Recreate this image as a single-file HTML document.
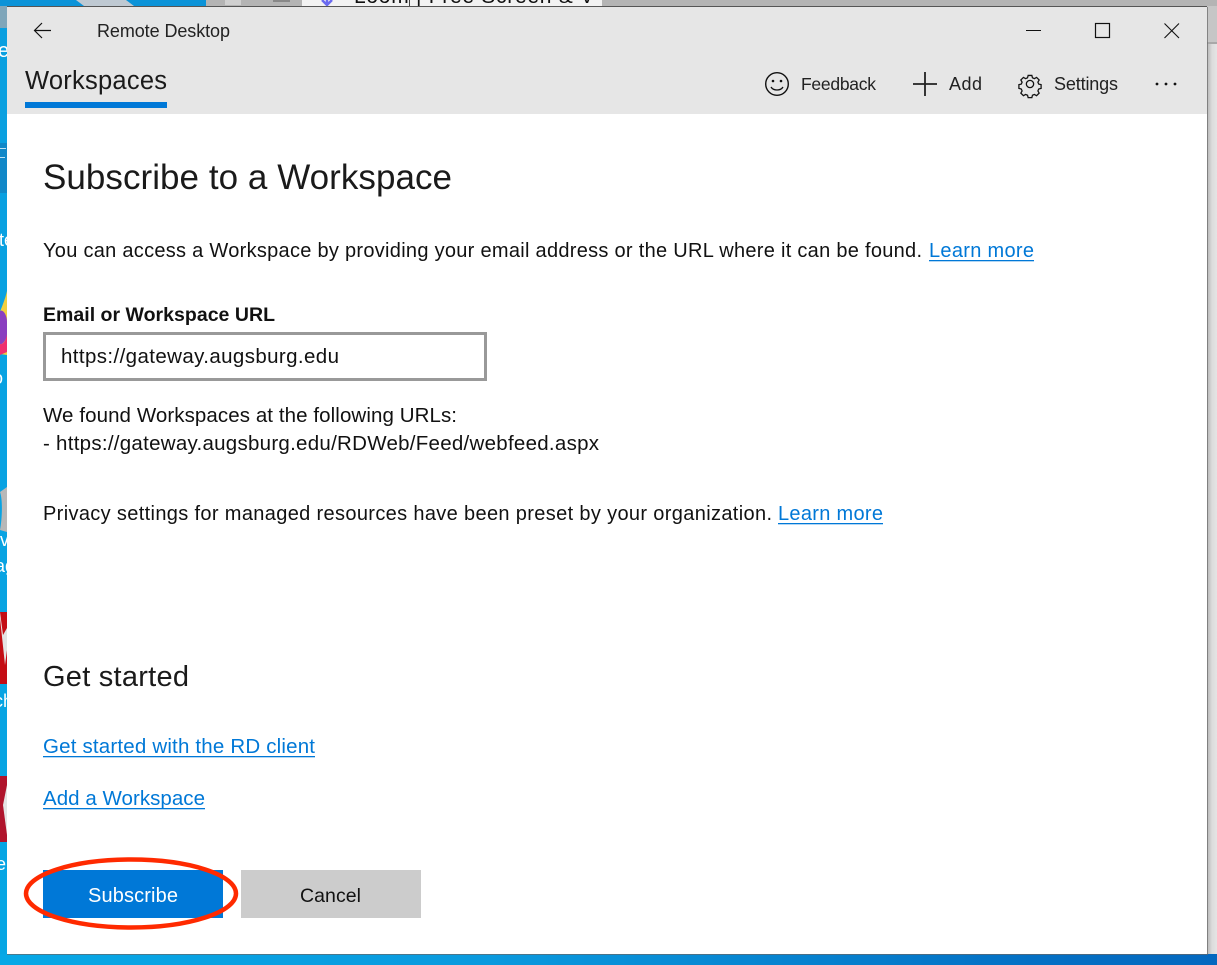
<!DOCTYPE html>
<html><head><meta charset="utf-8"><style>
html,body{margin:0;padding:0;width:1217px;height:965px;overflow:hidden;background:#0aa0de}
svg{display:block}
text{font-family:"Liberation Sans",sans-serif;fill:#111}
</style></head><body>
<svg width="1217" height="965" viewBox="0 0 1217 965" xmlns="http://www.w3.org/2000/svg">
<defs>
<linearGradient id="edge" x1="0" x2="1" y1="0" y2="0"><stop offset="0" stop-color="#b5b5b5"/><stop offset=".5" stop-color="#dcdcdc"/><stop offset="1" stop-color="#e4e4e4"/></linearGradient>
<linearGradient id="blue" x1="0" x2="0" y1="0" y2="1"><stop offset="0" stop-color="#0a9fe0"/><stop offset="1" stop-color="#06a6e4"/></linearGradient>
<linearGradient id="bot" x1="0" x2="1" y1="0" y2="0"><stop offset="0" stop-color="#07a8e6"/><stop offset=".4" stop-color="#0a9ade"/><stop offset=".85" stop-color="#0470c4"/><stop offset="1" stop-color="#0468bf"/></linearGradient>
</defs>
<!-- desktop -->
<rect width="1217" height="965" fill="url(#blue)"/>
<rect x="0" y="0" width="7" height="6" fill="#0b93d8"/>
<rect x="0" y="6" width="7" height="22" fill="#7fa6ba"/>
<rect x="0" y="143" width="7" height="50" fill="#1188c8"/>
<rect x="0" y="148" width="6" height="1" fill="#bfe3f5"/>
<rect x="0" y="157" width="5" height="1" fill="#bfe3f5"/>
<path d="M7 291V355L0 354V312C2 306 5 300 7 291Z" fill="#f0cf3f"/>
<path d="M0 311C3 309 7 315 7 322V336C5 342 2 345 0 344Z" fill="#8a3ec0"/>
<path d="M0 344C3 345 6 341 7 334V352L0 355Z" fill="#ef2f6f"/>
<path d="M7 487V532L0 530C2 520 3 500 0 492Z" fill="#b8b8b8"/>
<rect x="0" y="612" width="7" height="72" fill="#c40d14"/>
<path d="M0 618L5 665L7 650V628L3 635L0 612Z" fill="#e4e4e4"/>
<rect x="0" y="776" width="7" height="66" fill="#b0142c"/>
<path d="M7 785L3 805L7 835Z" fill="#e4e4e4"/>
<text x="-2" y="57" font-size="20" style="fill:#fff">e</text>
<text x="-1" y="246" font-size="18" style="fill:#fff">te</text>
<text x="-7" y="384" font-size="18" style="fill:#fff">o</text>
<text x="-5" y="546" font-size="18" style="fill:#fff">tv</text>
<text x="-5" y="572" font-size="18" style="fill:#fff">ag</text>
<text x="-6" y="707" font-size="18" style="fill:#fff">ch</text>
<text x="-4" y="870" font-size="18" style="fill:#fff">e</text>
<!-- browser behind -->
<rect x="0" y="0" width="206" height="6" fill="#0b93d8"/>
<path d="M76 0h50l8 6H84Z" fill="#bfc9d2"/>
<rect x="206" y="0" width="96" height="6" fill="#b4b4b4"/>
<rect x="225" y="0" width="16" height="5" fill="#d0d0d0"/>
<rect x="273" y="0" width="17" height="2" fill="#888"/>
<rect x="302" y="0" width="300" height="6" fill="#f2f2f2"/>
<path d="M322 0l5 5 5-5M327 0v5" stroke="#6a6af0" stroke-width="2.500" fill="none"/>
<text x="354" y="3" font-size="21" textLength="240" lengthAdjust="spacing">Loom | Free Screen &amp; V</text>
<rect x="409" y="0" width="1" height="6" fill="#444"/>
<rect x="602" y="0" width="615" height="6" fill="#b4b4b4"/>
<rect x="1207" y="6" width="10" height="959" fill="url(#edge)"/>
<rect x="1207" y="6" width="10" height="37" fill="#c6c6c6"/>
<rect x="1207" y="42" width="10" height="2" fill="#a8a8a8"/>
<rect x="0" y="954" width="1217" height="11" fill="url(#bot)"/>
<!-- window -->
<rect x="7" y="7" width="1201" height="948" fill="#666" opacity=".7"/>
<rect x="7" y="6" width="1200" height="1" fill="#555"/>
<rect x="7" y="7" width="1200" height="107" fill="#e6e6e6"/>
<rect x="7" y="114" width="1200" height="840" fill="#fff"/>
<!-- title bar -->
<path d="M51 30.500H35M42 23l-7.500 7.500 7.500 7.500" fill="none" stroke="#111" stroke-width="1.200"/>
<text x="97" y="37" font-size="18" textLength="133" lengthAdjust="spacing" style="fill:#222">Remote Desktop</text>
<rect x="1026" y="30" width="15" height="1" fill="#111"/>
<rect x="1095.500" y="23.500" width="14" height="14" fill="none" stroke="#111" stroke-width="1.200"/>
<path d="M1164.500 23.500l14.500 14.500M1179 23.500l-14.500 14.500" stroke="#111" stroke-width="1.100" fill="none"/>
<!-- tabs -->
<text x="25" y="89" font-size="25.500" textLength="142" lengthAdjust="spacing" style="fill:#1a1a1a">Workspaces</text>
<rect x="25" y="102" width="142" height="6" fill="#0078d7"/>
<!-- commands -->
<circle cx="777" cy="84" r="11.300" fill="none" stroke="#111" stroke-width="1.400"/>
<circle cx="773" cy="81" r="1.300" fill="#111"/><circle cx="781" cy="81" r="1.300" fill="#111"/>
<path d="M771 87c2.500 4 9.500 4 12 0" fill="none" stroke="#111" stroke-width="1.300"/>
<text x="801" y="90" font-size="17.500" textLength="75" lengthAdjust="spacing" style="fill:#222">Feedback</text>
<path d="M913 84h24M925 72v24" stroke="#222" stroke-width="1.800" fill="none"/>
<text x="949" y="90" font-size="18" textLength="33" lengthAdjust="spacing" style="fill:#222">Add</text>
<g transform="translate(1030 84) scale(.76)" fill="none" stroke="#111" stroke-width="1.700">
<path d="M-2.500-11.500h5l.8 3.200 2.600 1.100 2.900-1.700 3.500 3.500-1.700 2.900 1.100 2.600 3.200.8v5l-3.200.8-1.100 2.600 1.700 2.900-3.500 3.500-2.900-1.700-2.600 1.100-.8 3.200h-5l-.8-3.200-2.600-1.100-2.900 1.700-3.500-3.500 1.700-2.900-1.100-2.600-3.200-.8v-5l3.200-.8 1.100-2.600-1.700-2.900 3.500-3.500 2.900 1.700 2.600-1.100Z" transform="translate(0 0) scale(.98)"/>
<circle r="4.800"/>
</g>
<text x="1054" y="90" font-size="18" textLength="64" lengthAdjust="spacing" style="fill:#222">Settings</text>
<circle cx="1157" cy="84" r="1.400" fill="#111"/><circle cx="1166" cy="84" r="1.400" fill="#111"/><circle cx="1175" cy="84" r="1.400" fill="#111"/>
<!-- content -->
<text x="43" y="189" font-size="35" textLength="409" lengthAdjust="spacing" style="fill:#1a1a1a">Subscribe to a Workspace</text>
<text x="43" y="257" font-size="20" textLength="879" lengthAdjust="spacing">You can access a Workspace by providing your email address or the URL where it can be found.</text>
<text x="929" y="257" font-size="20" textLength="105" lengthAdjust="spacing" style="fill:#0078d7">Learn more</text>
<rect x="929" y="260" width="105" height="1.300" fill="#0078d7"/>
<text x="43" y="321" font-size="19.500" font-weight="bold" textLength="232" lengthAdjust="spacing">Email or Workspace URL</text>
<rect x="44.500" y="333.500" width="441" height="46" fill="#fff" stroke="#999" stroke-width="3"/>
<text x="61" y="363" font-size="20.500" textLength="278" lengthAdjust="spacing">https://gateway.augsburg.edu</text>
<text x="43" y="422" font-size="20.500" textLength="414" lengthAdjust="spacing">We found Workspaces at the following URLs:</text>
<text x="43" y="450" font-size="20.500" textLength="556" lengthAdjust="spacing">- https://gateway.augsburg.edu/RDWeb/Feed/webfeed.aspx</text>
<text x="43" y="520" font-size="20" textLength="729" lengthAdjust="spacing">Privacy settings for managed resources have been preset by your organization.</text>
<text x="778" y="520" font-size="20" textLength="105" lengthAdjust="spacing" style="fill:#0078d7">Learn more</text>
<rect x="778" y="523" width="105" height="1.300" fill="#0078d7"/>
<text x="43" y="686" font-size="29" textLength="146" lengthAdjust="spacing" style="fill:#1a1a1a">Get started</text>
<text x="43" y="753" font-size="20.500" textLength="272" lengthAdjust="spacing" style="fill:#0078d7">Get started with the RD client</text>
<rect x="43" y="756" width="272" height="1.300" fill="#0078d7"/>
<text x="43" y="805" font-size="20.500" textLength="162" lengthAdjust="spacing" style="fill:#0078d7">Add a Workspace</text>
<rect x="43" y="808" width="162" height="1.300" fill="#0078d7"/>
<!-- buttons -->
<rect x="43" y="870" width="180" height="48" fill="#0078d7"/>
<text x="88" y="902" font-size="20" textLength="90" lengthAdjust="spacing" style="fill:#fff">Subscribe</text>
<rect x="241" y="870" width="180" height="48" fill="#ccc"/>
<text x="300" y="902" font-size="19.500" textLength="61" lengthAdjust="spacing">Cancel</text>
<ellipse cx="131" cy="893.500" rx="105" ry="34" fill="none" stroke="#ff2a00" stroke-width="4.500"/>
</svg>
</body></html>
